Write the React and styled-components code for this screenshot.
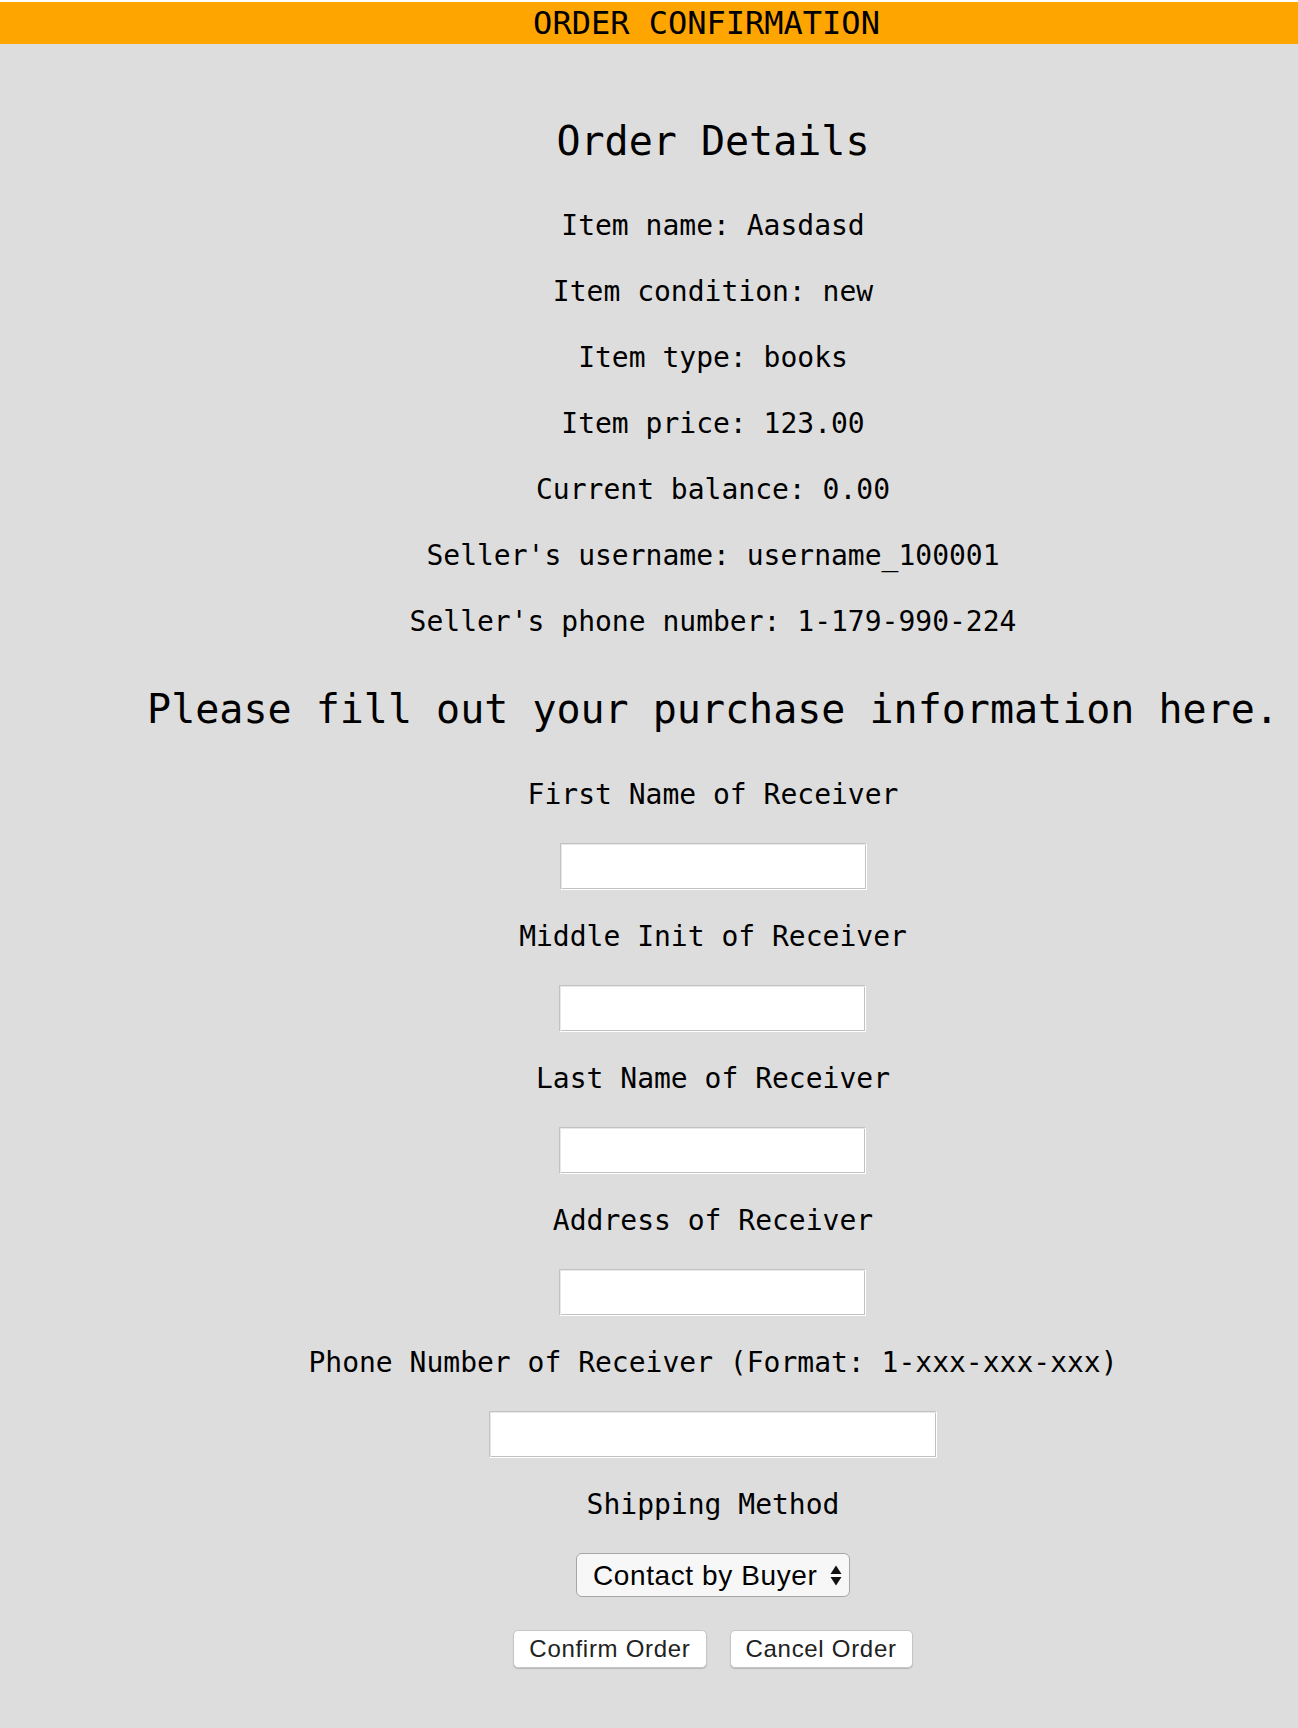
import React from "react";
import styled, { createGlobalStyle } from "styled-components";

const GlobalStyle = createGlobalStyle`
  html, body {
    margin: 0;
    padding: 0;
    background: #dddddd;
  }
  body {
    font-family: "DejaVu Sans Mono", "Liberation Mono", monospace;
    color: #000;
  }
`;

const Page = styled.div`
  min-height: 1728px;
  border-top: 2px solid #ffffff;
  box-sizing: border-box;
  background: #dddddd;
`;

const Header = styled.header`
  height: 42px;
  background: #ffa500;
  padding-left: 115px;
  text-align: center;
  font-family: "DejaVu Sans Mono", monospace;
  font-size: 32px;
  line-height: 42px;
  color: #000;
`;

const Main = styled.main`
  padding-left: 128px;
  display: flex;
  flex-direction: column;
  align-items: center;
  text-align: center;
`;

const Title = styled.h2`
  margin: ${(p) => p.$top}px 0 0;
  font-size: 40px;
  line-height: 46px;
  font-weight: normal;
  white-space: nowrap;
`;

const DetailList = styled.div`
  margin-top: 43px;
  display: flex;
  flex-direction: column;
  align-items: center;
  gap: 28px;
`;

const Detail = styled.p`
  margin: 0;
  font-size: 28px;
  line-height: 38px;
  white-space: pre;
`;

const Form = styled.form`
  margin-top: 44px;
  display: flex;
  flex-direction: column;
  align-items: center;
`;

const Field = styled.div`
  display: flex;
  flex-direction: column;
  align-items: center;
  & + & {
    margin-top: 28px;
  }
`;

const Label = styled.label`
  font-size: 28px;
  line-height: 38px;
  white-space: pre;
`;

const TextInput = styled.input`
  margin-top: 29px;
  width: ${(p) => p.$w}px;
  height: 47px;
  box-sizing: border-box;
  background: #ffffff;
  border: 1px solid;
  border-color: #c2c2c2 #ffffff #ffffff #c2c2c2;
  box-shadow: inset 1px 1px 0 #e8e8e8, inset -1px -1px 0 #c2c2c2;
  padding: 0 8px;
  font-size: 24px;
  outline: none;
`;

const SelectWrap = styled.div`
  position: relative;
  margin-top: 29px;
  width: 274px;
  height: 44px;
`;

const Select = styled.select`
  appearance: none;
  -webkit-appearance: none;
  width: 100%;
  height: 100%;
  box-sizing: border-box;
  padding: 0 0 0 16px;
  background: #f7f7f7;
  border: 1px solid #a6a6a6;
  border-radius: 6px;
  font-family: "Liberation Sans", Arial, sans-serif;
  font-size: 28px;
  letter-spacing: 0.6px;
  color: #000;
  outline: none;
`;

const Arrows = styled.svg`
  position: absolute;
  right: 8px;
  top: 12px;
  width: 12px;
  height: 21px;
  pointer-events: none;
`;

const ButtonRow = styled.div`
  margin-top: 33px;
  display: flex;
  gap: 23px;
`;

const Button = styled.button`
  height: 38px;
  padding: 0 15px;
  box-sizing: border-box;
  background: #ffffff;
  border: 1px solid #c6c6c6;
  border-radius: 5px;
  box-shadow: 0 1px 1px rgba(0, 0, 0, 0.18);
  font-family: "Liberation Sans", Arial, sans-serif;
  font-size: 24px;
  letter-spacing: 0.7px;
  color: #222;
  cursor: pointer;
`;

const details = [
  "Item name: Aasdasd",
  "Item condition: new",
  "Item type: books",
  "Item price: 123.00",
  "Current balance: 0.00",
  "Seller's username: username_100001",
  "Seller's phone number: 1-179-990-224",
];

const fields = [
  { id: "first", label: "First Name of Receiver", w: 307 },
  { id: "middle", label: "Middle Init of Receiver", w: 307 },
  { id: "last", label: "Last Name of Receiver", w: 307 },
  { id: "address", label: "Address of Receiver", w: 307 },
  { id: "phone", label: "Phone Number of Receiver (Format: 1-xxx-xxx-xxx)", w: 448 },
];

export default function App() {
  return (
    <Page>
      <GlobalStyle />
      <Header>ORDER CONFIRMATION</Header>
      <Main>
        <Title $top={74}>Order Details</Title>
        <DetailList>
          {details.map((d) => (
            <Detail key={d}>{d}</Detail>
          ))}
        </DetailList>
        <Title $top={45}>Please fill out your purchase information here.</Title>
        <Form onSubmit={(e) => e.preventDefault()}>
          {fields.map((f) => (
            <Field key={f.id}>
              <Label htmlFor={f.id}>{f.label}</Label>
              <TextInput id={f.id} type="text" $w={f.w} />
            </Field>
          ))}
          <Field>
            <Label htmlFor="shipping">Shipping Method</Label>
            <SelectWrap>
              <Select id="shipping" defaultValue="buyer">
                <option value="buyer">Contact by Buyer</option>
                <option value="seller">Contact by Seller</option>
              </Select>
              <Arrows viewBox="0 0 12 21">
                <path d="M6 0.5 L11.5 9 L0.5 9 Z" fill="#111" />
                <path d="M6 20.5 L11.5 12 L0.5 12 Z" fill="#111" />
              </Arrows>
            </SelectWrap>
          </Field>
          <ButtonRow>
            <Button type="submit">Confirm Order</Button>
            <Button type="button">Cancel Order</Button>
          </ButtonRow>
        </Form>
      </Main>
    </Page>
  );
}
